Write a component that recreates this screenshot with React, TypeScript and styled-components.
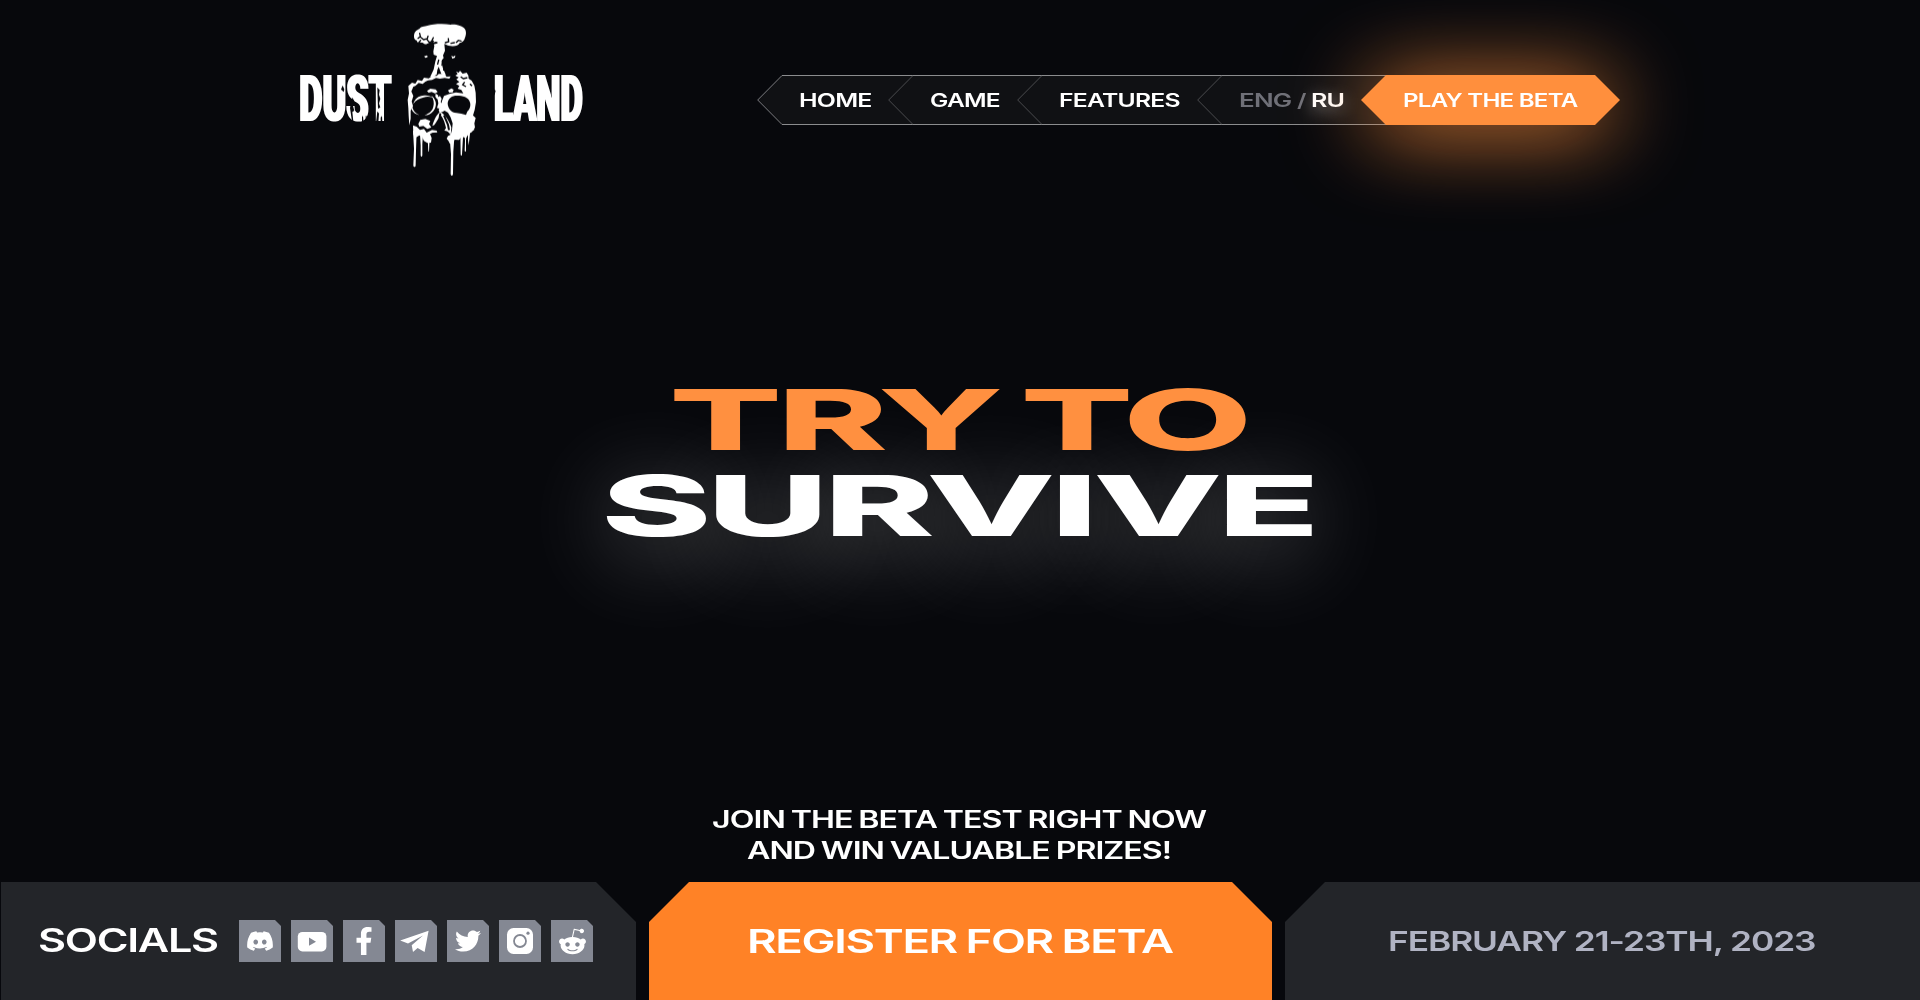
import React, { useLayoutEffect, useRef, useState } from "react";
import styled, { createGlobalStyle } from "styled-components";
import { FaDiscord, FaFacebookF, FaTwitter, FaRedditAlien } from "react-icons/fa";

const GlobalStyle = createGlobalStyle`
  *, *::before, *::after { box-sizing: border-box; }
  body {
    margin: 0;
    background: #07080c;
    color: #fff;
    font-family: Inter, "Liberation Sans", sans-serif;
    overflow: hidden;
  }
`;

const Page = styled.div`
  display: flex;
  flex-direction: column;
  height: 1000px;
  background: #07080c;
`;

/* Extended lettering: a line of text stretched to an exact set width. */
const SetBox = styled.span<{ $width: number }>`
  display: inline-flex;
  width: ${(p) => p.$width}px;
  white-space: nowrap;
`;

const SetText = styled.span`
  flex: none;
  padding-right: 0.03em;
  letter-spacing: -0.03em;
  transform-origin: 0 50%;
`;

function Extended({ width, children }: { width: number; children: string }) {
  const ref = useRef<HTMLSpanElement>(null);
  const [scale, setScale] = useState(1);
  useLayoutEffect(() => {
    if (ref.current) setScale(width / ref.current.offsetWidth);
  }, [width]);
  return (
    <SetBox $width={width}>
      <SetText ref={ref} style={{ transform: `scaleX(${scale})` }}>
        {children}
      </SetText>
    </SetBox>
  );
}

/* ---------- header ---------- */

const Header = styled.header`
  display: flex;
  justify-content: space-between;
  align-items: flex-start;
  padding: 10px 300px 0 290px;
  height: 200px;
`;

const Logo = styled.svg`
  flex: none;
  width: 300px;
  height: 175px;
`;

const Nav = styled.nav`
  display: flex;
  height: 50px;
  margin-top: 65px;
  font-size: 18.4px;
  font-weight: 600;
  line-height: 48px;
`;

const Chevron = styled.svg<{ $bright?: boolean }>`
  flex: none;
  width: 25px;
  height: 50px;
  stroke: ${(p) => (p.$bright ? "#7c7d80" : "#4a4b4e")};
  fill: ${(p) => (p.$bright ? "#101114" : "none")};
`;

const NavItem = styled.a<{ $last?: boolean }>`
  display: flex;
  height: 50px;
  padding: 0 ${(p) => (p.$last ? 41.5 : 0)}px 0 17px;
  background: #101114;
  border: solid #8b8c8e;
  border-width: 1px 0;
  gap: 16px;

  ${Chevron} {
    margin-top: -1px;
  }
`;

const Langs = styled.span`
  display: flex;
  gap: 4.5px;
  color: #6f7078;
`;

const ActiveLang = styled.span`
  color: #fff;
  text-shadow: 0 4px 14px rgba(255, 255, 255, 0.5);
`;

const BetaGlow = styled.div`
  margin-left: -25px;
  filter: drop-shadow(0 6px 42px rgba(255, 143, 60, 0.98));
`;

const BetaButton = styled.a`
  display: flex;
  width: 259px;
  height: 50px;
  padding: 1px 0 0 42px;
  background: #ff8f3d;
  clip-path: polygon(0 50%, 25px 0, 234px 0, 100% 50%, 234px 100%, 25px 100%);
`;

function DustLandLogo() {
  return (
    <Logo viewBox="0 0 900 525" fill="#fff">
      <defs>
        <filter id="heavy" x="-5%" y="-5%" width="110%" height="110%">
          <feMorphology operator="dilate" radius="3 0" />
        </filter>
      </defs>
      <g fontFamily="Roboto, Inter, sans-serif" fontWeight={900} fontSize={196} filter="url(#heavy)">
        <text x={0} y={0} transform="translate(28 334) scale(.52 1)" textLength={530} lengthAdjust="spacingAndGlyphs">
          DUST
        </text>
        <text x={0} y={0} transform="translate(612 334) scale(.52 1)" textLength={512} lengthAdjust="spacingAndGlyphs">
          LAND
        </text>
      </g>
      {/* worn edges of the lettering */}
      <g fill="#07080c">
        <path d="M158 226l5 12-2 8-8-8zM262 232l7 8-2 14 4 12-4 14 4 12-7 4zM292 256l-6 16 3 22-6 12 8 30 8-6zM186 262l7 10-4 16 4 14-6 4 3 28h-4l-6-40zM216 320l3-2 2 22h-5zM227 318l3 0 1 20h-4z" />
        <path d="M262 304l5 6-2 28h-7zM272 322l4-4 1 18h-5zM610 236l7 6-3 12-4 2z" />
      </g>
      {/* mushroom cloud */}
      <path d="M372 79c0-12 6-18 16-22 4-8 16-8 24-10 16-5 48-7 70-3 16-2 34 4 42 12 6 8 4 20 1 27-2 10-9 14-16 16-4 8-16 11-26 9-8 1-14-5-20-6l2 20-6 14 2 8-6 8 3 20 10 24c-6 0-10-2-14-4l-8-22-4 10-2 14-16 8-3-2 10-22 5-24 5-16-10-4-1-10 3-16-4-14-16 6c-6 4-12 3-14-1-10 2-18-1-19-8-6-2-8-6-8-12z" />
      <path d="M402 139l8-3 4 4-7 4zM484 137l6 3 6-4-1 7-8 3z" />
      <g fill="none" stroke="#07080c" strokeWidth={4} strokeLinecap="round">
        <path d="M389 70l2 9-7 6m7-4l10 8 11-3 2-8m-4 9l8 10 12-4m0-10l-5 10 6 8 10-3M392 91l-6 7 12 3M428 100l10-3M466 98l10-3-1-9m8 14l10-2M499 97l6-6 8 2M458 150l-2 16m7 0l-2 14M446 150l-3 12" />
      </g>
      {/* crown line and left side of the skull */}
      <path d="M355 228L366 218L376 221L383 210L396 213L402 203L416 205L428 197L440 198L446 192L462 192L470 200L482 199L478 206L464 204L450 206L438 204L426 210L414 211L406 215L398 222L386 219L376 228L370 230L364 244L370 258L365 274L369 288L362 302L362 326L358 346L356 318L355 294L353 270L357 250Z" />
      {/* right side: brow, temple and cheek */}
      <path d="M498 184L506 188L510 182L518 191L530 188L535 196L536 206L545 212L553 226L557 248L558 276L554 300L549 316L557 324L553 340L555 352L546 366L536 372L528 384L515 380L507 390L494 389L484 402L479 400L475 392L470 386L474 378L482 374L486 360L488 340L482 322L474 308L464 302L457 306L449 308L446 300L453 287L456 273L462 258L478 252L498 247L520 250L514 240L503 236L508 228L498 222L508 216L499 208L506 202L496 197L503 192Z" />
      <path d="M474 241l10-6 7 4-3 8-10 1zM411 243l10-7 16 2 6 8-8 4-10-4-9 2zM437 250l8 6-3 12-6-8zM442 262l8-4 5 8-3 10 7 8-10 12-8-2 4-14z" />
      {/* eye sockets */}
      <path d="M473 279c2-14 12-22 28-22 17 0 34 4 39 20 3 10-1 21-8 27l-4 11-14-4-14-2c-16 0-27-14-27-30z" fill="#07080c" />
      <path d="M370 282c5-17 16-24 28-25 12-2 24 0 32 7-10-4-19-5-29-2-13 3-24 8-31 20z" />
      <path d="M424 256c11 9 17 22 12 36-5 14-17 24-33 24 15-6 24-13 27-26 3-12 1-23-6-34zM366 284c1 14 8 25 22 31-11-2-21-9-24-20z" />
      {/* left cheek */}
      <path d="M385 342L391 330L406 327L421 333L417 342L424 352L412 357L400 348L388 350Z" />
      <path d="M369 346L380 350L390 360L402 357L410 368L426 360L440 362L442 367L428 368L420 372L425 384L423 398L412 399L402 393L396 380L388 376L378 382L370 374Z" />
      {/* nose */}
      <path d="M427 348c5-18 12-34 24-43 14 9 26 26 33 47l-2 24c-5-10-11-14-19-14l5-8c-3-14-7-28-15-38-7 8-14 19-20 29z" />
      <path d="M451 310l-4 26-2 26M462 316l12 28 3 16" fill="none" stroke="#07080c" strokeWidth={6} />
      <path d="M544 357l8-2 1 5-7 2z" />
      {/* cracks on the brow */}
      <path d="M512 200l8 6 12-3M524 216l-6 8 10 6M540 222l6 6" fill="none" stroke="#07080c" strokeWidth={4} />
      {/* drips */}
      <path d="M369 362h11l-2 60-1 44c-1 6-6 6-7 0l2-50zM390 372h9l-2 30v34c-1 5-4 5-5 0l0-30zM413 384h6l-2 40h-2zM479 384h14l-3 40-1 68c-1 7-6 7-7 0l1-60zM511 368h9l-2 30-2 36c-1 4-3 4-4 0zM523 366h8l-3 24v32c-1 4-3 4-4 0l1-30zM534 362h7l-3 26-2 18-2-16z" />
    </Logo>
  );
}

const Divider = ({ bright }: { bright?: boolean }) => (
  <Chevron viewBox="0 0 25 50" $bright={bright}>
    <path d="M25 .5L.7 25 25 49.5" />
  </Chevron>
);

/* ---------- hero ---------- */

const Hero = styled.main`
  display: flex;
  flex: 1;
  flex-direction: column;
  align-items: center;
  padding-top: 176px;
`;

const Title = styled.h1`
  display: flex;
  flex-direction: column;
  align-items: center;
  margin: 0;
  font-size: 84.4px;
  font-weight: 800;
  line-height: 86px;
`;

const TitleTop = styled.span`
  position: relative;
  z-index: 1;
  color: #ff9040;
  word-spacing: -5px;
`;

const TitleBottom = styled.span`
  text-shadow: 0 14px 64px rgba(255, 255, 255, 0.38);
`;

const Teaser = styled.p`
  display: flex;
  flex-direction: column;
  align-items: center;
  margin: auto 0 16px;
  padding-right: 1px;
  font-size: 23.6px;
  font-weight: 570;
  line-height: 31px;
  word-spacing: -1px;
`;

/* ---------- bottom bar ---------- */

const BottomBar = styled.footer`
  display: grid;
  grid-template-columns: 636px 623px 635px;
  gap: 13px;
  height: 118px;
`;

const Panel = styled.section<{ $cut: "left" | "right" | "both" }>`
  display: flex;
  align-items: center;
  justify-content: center;
  padding-top: ${(p) => (p.$cut === "both" ? 2 : 0)}px;
  background: ${(p) => (p.$cut === "both" ? "#ff8226" : "#232529")};
  clip-path: ${(p) =>
    ({
      right: "polygon(1px 0, calc(100% - 40px) 0, 100% 40px, 100% 100%, 1px 100%)",
      left: "polygon(0 40px, 40px 0, 100% 0, 100% 100%, 0 100%)",
      both: "polygon(0 40px, 40px 0, calc(100% - 40px) 0, 100% 40px, 100% 100%, 0 100%)",
    })[p.$cut]};
`;

const SocialsPanel = styled(Panel)`
  justify-content: flex-start;
  padding-left: 38px;
  gap: 20px;
`;

const PanelTitle = styled.h2`
  margin: 0;
  font-size: 32.2px;
  font-weight: 570;
  line-height: 40px;
  word-spacing: -1px;
`;

const DateText = styled.p`
  margin: 0;
  color: #b0b3c3;
  font-size: 26.8px;
  font-weight: 600;
  line-height: 34px;
`;

const SocialList = styled.div`
  display: flex;
  gap: 10px;
`;

const SocialLink = styled.a`
  display: flex;
  align-items: center;
  justify-content: center;
  width: 42px;
  height: 42px;
  background: #848893;
  color: #fff;
  clip-path: polygon(0 0, 36px 0, 100% 6px, 100% 100%, 0 100%);
`;

const Glyph = styled.svg`
  width: 42px;
  height: 42px;
`;

const socials = [
  <FaDiscord size={28} />,
  <Glyph viewBox="0 0 42 42">
    <rect x="6.8" y="12" width="28.6" height="19.4" rx="4.6" fill="#fff" />
    <path d="M18 17.6v8.2l7-4.1z" fill="#848893" />
  </Glyph>,
  <FaFacebookF size={28} />,
  <Glyph viewBox="0 0 42 42">
    <path d="M5.2 20.6L33.6 10.8 29.6 31.9 22.6 28 18 32 16.7 25.2 28 15.4 13 23.6z" fill="#fff" />
  </Glyph>,
  <FaTwitter size={26} />,
  <Glyph viewBox="0 0 42 42">
    <rect x="8" y="8" width="26" height="26" rx="6.5" fill="#fff" />
    <circle cx="21" cy="21" r="6" fill="none" stroke="#848893" strokeWidth="1.8" />
    <circle cx="29" cy="13.2" r="1.6" fill="#848893" />
  </Glyph>,
  <FaRedditAlien size={29} />,
];

export default function App() {
  return (
    <Page>
      <GlobalStyle />
      <Header>
        <DustLandLogo />
        <Nav>
          <Divider bright />
          <NavItem>
            <Extended width={73}>HOME</Extended>
            <Divider />
          </NavItem>
          <NavItem>
            <Extended width={70.5}>GAME</Extended>
            <Divider />
          </NavItem>
          <NavItem>
            <Extended width={122}>FEATURES</Extended>
            <Divider />
          </NavItem>
          <NavItem $last>
            <Langs>
              <Extended width={53.5}>ENG</Extended>
              <Extended width={9.5}>/</Extended>
              <ActiveLang>
                <Extended width={34}>RU</Extended>
              </ActiveLang>
            </Langs>
          </NavItem>
          <BetaGlow>
            <BetaButton>
              <Extended width={175}>PLAY THE BETA</Extended>
            </BetaButton>
          </BetaGlow>
        </Nav>
      </Header>

      <Hero>
        <Title>
          <TitleTop>
            <Extended width={583}>TRY TO</Extended>
          </TitleTop>
          <TitleBottom>
            <Extended width={718}>SURVIVE</Extended>
          </TitleBottom>
        </Title>
        <Teaser>
          <Extended width={495}>JOIN THE BETA TEST RIGHT NOW</Extended>
          <Extended width={425}>AND WIN VALUABLE PRIZES!</Extended>
        </Teaser>
      </Hero>

      <BottomBar>
        <SocialsPanel $cut="right">
          <PanelTitle>
            <Extended width={181}>SOCIALS</Extended>
          </PanelTitle>
          <SocialList>
            {socials.map((icon, i) => (
              <SocialLink key={i}>{icon}</SocialLink>
            ))}
          </SocialList>
        </SocialsPanel>
        <Panel $cut="both">
          <PanelTitle>
            <Extended width={427}>REGISTER FOR BETA</Extended>
          </PanelTitle>
        </Panel>
        <Panel $cut="left">
          <DateText>
            <Extended width={429}>FEBRUARY 21-23TH, 2023</Extended>
          </DateText>
        </Panel>
      </BottomBar>
    </Page>
  );
}
